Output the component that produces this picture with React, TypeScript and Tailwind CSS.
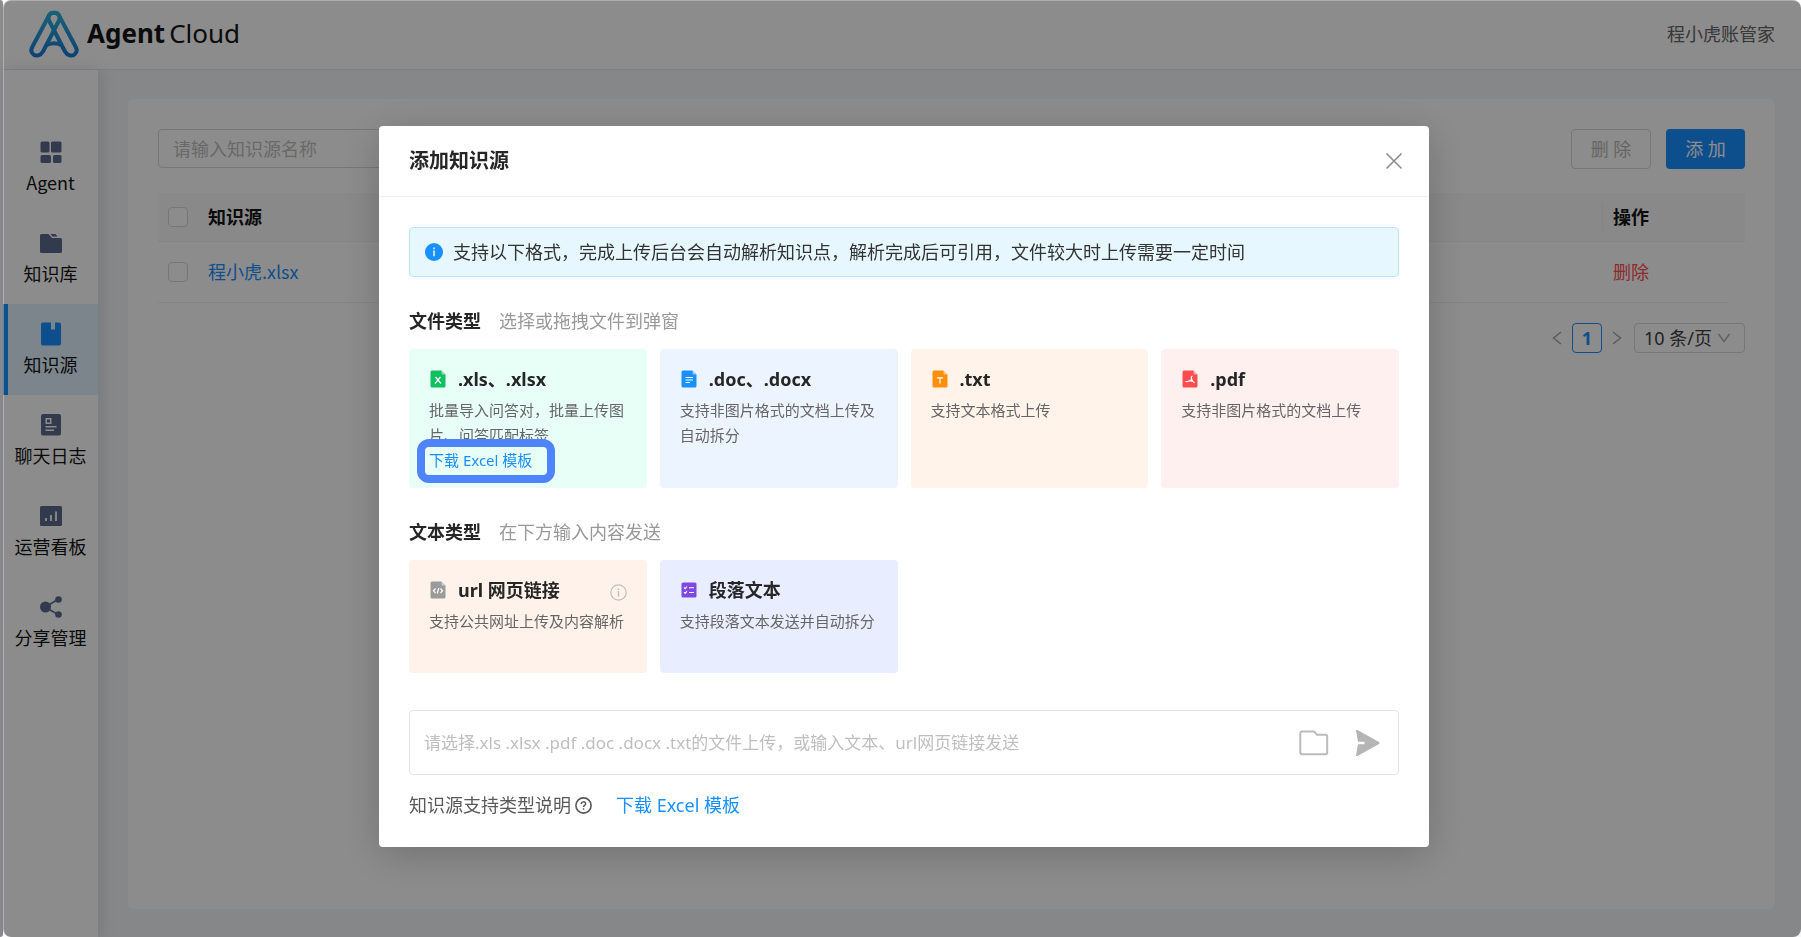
import React, { useState } from "react";

interface NavItem {
    label: string;
    icon: React.ReactNode;
    active?: boolean;
}

interface SourceCard {
    title: string;
    desc: string;
    bg: string;
    icon: React.ReactNode;
    download?: boolean;
    info?: boolean;
}

const navItems: NavItem[] = [
    {
        label: "Agent",
        icon: (
            <svg width="24" height="24" viewBox="0 0 24 24" fill="currentColor">
                <rect x="1.5" y="1.5" width="9" height="11" rx="1.5" />
                <rect x="12" y="1.5" width="10.5" height="11" rx="1.5" />
                <rect x="1.5" y="15" width="10.5" height="8" rx="1.5" />
                <rect x="14" y="15" width="8.5" height="8" rx="1.5" />
            </svg>
        ),
    },
    {
        label: "知识库",
        icon: (
            <svg width="24" height="24" viewBox="0 0 24 24" fill="currentColor">
                <path d="M1 4.5A1.5 1.5 0 0 1 2.500 3H9.500L13 7H21.500A1.500 1.500 0 0 1 23 8.500V20.500A1.500 1.500 0 0 1 21.500 22H2.500A1.500 1.500 0 0 1 1 20.500Z" />
                <path d="M11.500 3H16.500L18.500 5.500H13.500Z" />
            </svg>
        ),
    },
    {
        label: "知识源",
        active: true,
        icon: (
            <svg width="24" height="24" viewBox="0 0 24 24" fill="currentColor">
                <path d="M4 0.500H12V7.500H16V0.500H20A2 2 0 0 1 22 2.500V21.500A2 2 0 0 1 20 23.500H4A2 2 0 0 1 2 21.500V2.500A2 2 0 0 1 4 0.500Z" />
            </svg>
        ),
    },
    {
        label: "聊天日志",
        icon: (
            <svg width="24" height="24" viewBox="0 0 24 24" fill="currentColor">
                <path
                    fillRule="evenodd"
                    d="M4 1H20A2 2 0 0 1 22 3V20.500A2 2 0 0 1 20 22.500H4A2 2 0 0 1 2 20.500V3A2 2 0 0 1 4 1ZM6.500 5V11H12.500V5ZM8 6.500H11V9.500H8ZM6.500 13V14.500H17.500V13ZM6.500 16.500V18H15V16.500Z"
                />
            </svg>
        ),
    },
    {
        label: "运营看板",
        icon: (
            <svg width="24" height="24" viewBox="0 0 24 24">
                <rect x="1" y="2" width="22" height="20" rx="1.5" fill="currentColor" />
                <path d="M7 14V17M12 11V17M17 7.500V17" stroke="#fff" strokeWidth="1.800" />
            </svg>
        ),
    },
    {
        label: "分享管理",
        icon: (
            <svg width="24" height="24" viewBox="0 0 24 24" fill="currentColor">
                <path d="M6 12L19 4.500M6 12L19 19.500" stroke="currentColor" strokeWidth="1.500" />
                <circle cx="6.500" cy="12" r="5.500" />
                <circle cx="19.500" cy="4.500" r="3.300" />
                <circle cx="19.500" cy="19.500" r="3.300" />
            </svg>
        ),
    },
];

const FileIcon = ({ color, children }: { color: string; children: React.ReactNode }) => (
    <svg width="16" height="18" viewBox="0 0 16 18" fill="none" className="shrink-0">
        <path d="M2 0.500H11.500L15.500 4.500V16A1.500 1.500 0 0 1 14 17.500H2A1.500 1.500 0 0 1 0.500 16V2A1.500 1.500 0 0 1 2 0.500Z" fill={color} />
        <path d="M11.500 0.500L15.500 4.500H12.500A1 1 0 0 1 11.500 3.500Z" fill="#fff" fillOpacity="0.5" />
        <g stroke="#fff" strokeWidth="1.200">{children}</g>
    </svg>
);

const fileCards: SourceCard[] = [
    {
        title: ".xls、.xlsx",
        desc: "批量导入问答对，批量上传图片、问答匹配标签",
        bg: "bg-[#e8fff8]",
        download: true,
        icon: (
            <FileIcon color="#11c05f">
                <path d="M5.500 7L11 13.500M10.500 7L5 13.500" />
            </FileIcon>
        ),
    },
    {
        title: ".doc、.docx",
        desc: "支持非图片格式的文档上传及自动拆分",
        bg: "bg-[#ecf5ff]",
        icon: (
            <FileIcon color="#1890ff">
                <path d="M4.500 7.500H12M4.500 10H12M4.500 12.500H9" />
            </FileIcon>
        ),
    },
    {
        title: ".txt",
        desc: "支持文本格式上传",
        bg: "bg-[#fff3ea]",
        icon: (
            <FileIcon color="#ff8f0b">
                <path d="M5 7.800H11M8 7.800V13.500" />
            </FileIcon>
        ),
    },
    {
        title: ".pdf",
        desc: "支持非图片格式的文档上传",
        bg: "bg-[#fff0f0]",
        icon: (
            <FileIcon color="#fb4c50">
                <path d="M10.500 6C8.500 6.500 9 10 12.500 12.800M9.300 9.500C8 11.500 6 11.800 3.500 11.500M8.500 10.800L11 11.500" />
            </FileIcon>
        ),
    },
];

const textCards: SourceCard[] = [
    {
        title: "url 网页链接",
        desc: "支持公共网址上传及内容解析",
        bg: "bg-[#fff2ea]",
        info: true,
        icon: (
            <FileIcon color="#9b9b9b">
                <path d="M5.500 7.500L3.500 9.800L5.500 12M10.500 7.500L12.500 9.800L10.500 12M8.800 7L7.200 12.500" />
            </FileIcon>
        ),
    },
    {
        title: "段落文本",
        desc: "支持段落文本发送并自动拆分",
        bg: "bg-[#e8eeff]",
        icon: (
            <svg width="16" height="18" viewBox="0 0 16 18" fill="none" className="shrink-0">
                <rect x="0.500" y="1.500" width="15" height="15" rx="1.500" fill="#7f47e3" />
                <path d="M3 6.500L4.200 7.700L6 5.500M3 11.200L4.200 12.400L6 10.200M8 6.800H13M8 11.500H13" stroke="#fff" strokeWidth="1.100" />
            </svg>
        ),
    },
];

const Logo = () => (
    <svg width="50" height="48" viewBox="0 0 50 48" fill="none">
        <defs>
            <linearGradient id="logo" x1="25" y1="0" x2="25" y2="48" gradientUnits="userSpaceOnUse">
                <stop stopColor="#2fb4d8" />
                <stop offset="1" stopColor="#1876d2" />
            </linearGradient>
        </defs>
        <g stroke="url(#logo)" strokeWidth="4" strokeLinejoin="round">
            <path d="M19.500 6.500C21 1.500 29 1.500 30.500 6.500C31 8.500 30.500 9.500 29.500 11.500L14 41.500C11.500 45.800 7 46.500 4.500 44.500C2 42.500 1.500 40 3.500 36.500Z" />
            <path d="M30.500 6.500C29 1.500 21 1.500 19.500 6.500C19 8.500 19.500 9.500 20.500 11.500L36 41.500C38.500 45.800 43 46.500 45.500 44.500C48 42.500 48.500 40 46.500 36.500Z" />
            <path d="M17 35.500C21 32.500 29 32.500 33 35.500" />
        </g>
    </svg>
);

const Card = ({ card, height }: { card: SourceCard; height: string }) => (
    <section className={`rounded px-5 pt-4 ${card.bg} ${height}`}>
        <div className="flex items-center">
            <span className="ml-px">{card.icon}</span>
            <h4 className="ml-3 text-lg leading-7 font-bold text-[#262626]">{card.title}</h4>
            {card.info && (
                <button type="button" aria-label="说明" className="ml-auto pt-1 text-[#bfbfbf]">
                    <svg width="17" height="17" viewBox="0 0 17 17" fill="none" stroke="currentColor">
                        <circle cx="8.500" cy="8.500" r="7.700" strokeWidth="1.200" />
                        <path d="M8.500 7.300V12.500M8.500 4.500V6" strokeWidth="1.400" />
                    </svg>
                </button>
            )}
        </div>
        <p className="mt-[5px] text-[15px] leading-[25px] text-[#666]">{card.desc}</p>
        {card.download && (
            <div className="relative">
                <a href="#template" className="relative z-10 block text-[15px] leading-[25px] text-[#1890ff]">
                    下载 Excel 模板
                </a>
                <span className="absolute -top-[9px] -left-3 h-[44px] w-[138px] rounded-xl border-8 border-[#5084ff]" />
            </div>
        )}
    </section>
);

const AddSourceModal = ({ onClose }: { onClose: () => void }) => {
    const [text, setText] = useState("");

    return (
        <div className="fixed inset-0 left-[3px] flex items-start justify-center overflow-hidden rounded-lg border-t border-l border-white/30 bg-black/45 pt-[125px] pl-[3px]">
            <div
                role="dialog"
                aria-label="添加知识源"
                className="w-[1050px] rounded bg-white shadow-[0_8px_40px_rgba(0,0,0,0.2)]"
            >
                <header className="flex h-[71px] items-center justify-between border-b border-[#f0f0f0] px-[30px]">
                    <h2 className="text-xl font-bold text-[#262626]">添加知识源</h2>
                    <button type="button" aria-label="关闭" onClick={onClose} className="-mr-2 p-1 text-[#8c8c8c]">
                        <svg width="18" height="18" viewBox="0 0 18 18" stroke="currentColor" strokeWidth="1.600">
                            <path d="M1.500 1.500L16.500 16.500M16.500 1.500L1.500 16.500" />
                        </svg>
                    </button>
                </header>

                <div className="px-[30px] pt-[30px] pb-7">
                    <div className="flex h-[50px] items-center rounded border border-[#bae7ff] bg-[#e6f7ff] px-[15px]">
                        <svg width="18" height="18" viewBox="0 0 18 18">
                            <circle cx="9" cy="9" r="9" fill="#1890ff" />
                            <path d="M9 4.500V6.200M9 7.500V13.200" stroke="#fff" strokeWidth="1.400" />
                        </svg>
                        <span className="ml-[10px] text-lg text-[#333]">
                            支持以下格式，完成上传后台会自动解析知识点，解析完成后可引用，文件较大时上传需要一定时间
                        </span>
                    </div>

                    <div className="mt-[30px] flex gap-[18px] text-lg">
                        <h3 className="font-bold text-[#262626]">文件类型</h3>
                        <span className="text-[#999]">选择或拖拽文件到弹窗</span>
                    </div>
                    <div className="mt-[14px] grid grid-cols-4 gap-[13px]">
                        {fileCards.map((card) => (
                            <Card key={card.title} card={card} height="h-[139px]" />
                        ))}
                    </div>

                    <div className="mt-[30px] flex gap-[18px] text-lg">
                        <h3 className="font-bold text-[#262626]">文本类型</h3>
                        <span className="text-[#999]">在下方输入内容发送</span>
                    </div>
                    <div className="mt-[14px] grid grid-cols-4 gap-[13px]">
                        {textCards.map((card) => (
                            <Card key={card.title} card={card} height="h-[113px]" />
                        ))}
                    </div>

                    <div className="mt-[37px] flex h-[65px] items-center rounded border border-[#e6e6e6] pr-[17px] pl-[14px]">
                        <input
                            type="text"
                            aria-label="内容"
                            value={text}
                            onChange={(e) => setText(e.target.value)}
                            placeholder="请选择.xls .xlsx .pdf .doc .docx .txt的文件上传，或输入文本、url网页链接发送"
                            className="min-w-0 flex-1 text-[17px] outline-none placeholder:text-[#bfbfbf]"
                        />
                        <button type="button" aria-label="选择文件" className="text-[#bcbcbc]">
                            <svg width="30" height="26" viewBox="0 0 30 26" fill="none" stroke="currentColor" strokeWidth="2">
                                <path d="M3 1.500H15L18 4.800H26.500A1.700 1.700 0 0 1 28.200 6.500V22.500A1.700 1.700 0 0 1 26.500 24.200H3A1.700 1.700 0 0 1 1.300 22.500V3.200A1.700 1.700 0 0 1 3 1.500Z" />
                            </svg>
                        </button>
                        <button type="button" aria-label="发送" className="ml-[26px] text-[#b5b5b5]">
                            <svg width="26" height="28" viewBox="0 0 26 28" fill="currentColor">
                                <path d="M1 1.500C1 0.800 1.800 0.500 2.500 0.900L24 12.900C24.800 13.400 24.800 14.400 24 14.900L2.500 26.900C1.800 27.300 1 27 1 26.200L3 15.200H9.500V12.800H3Z" />
                            </svg>
                        </button>
                    </div>

                    <div className="mt-4 flex items-center text-lg text-[#595959]">
                        <span>知识源支持类型说明</span>
                        <svg width="17" height="17" viewBox="0 0 17 17" fill="none" stroke="currentColor" className="ml-1">
                            <circle cx="8.500" cy="8.500" r="7.600" strokeWidth="1.600" />
                            <path d="M6.300 7C6.300 4.200 10.700 4.200 10.700 6.800C10.700 8.300 8.500 8.300 8.500 10M8.500 11.200V12.800" strokeWidth="1.500" />
                        </svg>
                        <a href="#template" className="ml-6 text-[#1890ff]">
                            下载 Excel 模板
                        </a>
                    </div>
                </div>
            </div>
        </div>
    );
};

const App = () => {
    const [open, setOpen] = useState(true);

    return (
        <div className="flex min-h-screen font-['Noto_Sans','Noto_Sans_CJK_SC',sans-serif]">
            <div className="w-[3px] shrink-0 rounded-r-sm bg-[#8c8c8c]" />
            <div className="flex min-w-0 flex-1 flex-col bg-[#f5f6f7]">
                <header className="flex h-[70px] items-center justify-between border-b border-[#eaeaea] bg-white pr-[26px] pb-[2px] pl-[26px]">
                    <div className="flex items-center">
                        <Logo />
                        <span className="ml-2 text-[26px] text-[#141414]">
                            <b>Agent</b>
                            <span className="ml-1">Cloud</span>
                        </span>
                    </div>
                    <span className="text-lg text-[#666]">程小虎账管家</span>
                </header>

                <div className="flex flex-1">
                    <nav className="w-[95px] shrink-0 bg-white pt-[52px] shadow-[2px_0_14px_rgba(60,80,130,0.18)]">
                        {navItems.map((item) => (
                            <a
                                key={item.label}
                                href="#nav"
                                className={`flex h-[91px] flex-col items-center border-l-[5px] pt-[18px] pr-[5px] font-['Noto_Sans_CJK_SC',sans-serif] text-lg leading-7 text-[#141414] ${
                                    item.active ? "border-[#1890ff] bg-[#e1f3fd]" : "border-transparent"
                                }`}
                            >
                                <span className={item.active ? "text-[#1890ff]" : "text-[#5c6b8f]"}>{item.icon}</span>
                                <span className="mt-1 whitespace-nowrap">{item.label}</span>
                            </a>
                        ))}
                    </nav>

                    <main className="mt-[29px] mr-[26px] mb-7 ml-[30px] flex-1 rounded-md bg-white px-[30px] pt-[30px]">
                        <div className="flex items-start">
                            <input
                                type="text"
                                aria-label="知识源名称"
                                placeholder="请输入知识源名称"
                                className="h-[39px] w-[300px] rounded border border-[#d9d9d9] px-[14px] text-lg placeholder:text-[#bfbfbf]"
                            />
                            <button
                                type="button"
                                disabled
                                className="ml-auto h-10 w-20 rounded border border-[#d9d9d9] text-lg text-[#b8b8b8]"
                            >
                                删 除
                            </button>
                            <button
                                type="button"
                                onClick={() => setOpen(true)}
                                className="ml-[15px] h-10 w-[79px] rounded bg-[#1890ff] text-lg text-white"
                            >
                                添 加
                            </button>
                        </div>

                        <table className="mt-6 w-full text-left text-lg">
                            <thead className="bg-[#fafafa]">
                                <tr className="h-12 border-b border-[#f0f0f0]">
                                    <th className="w-[50px] pl-[10px]">
                                        <input type="checkbox" aria-label="全选" className="block size-5 appearance-none rounded border border-[#d9d9d9] bg-white" />
                                    </th>
                                    <th className="text-[#141414]">知识源</th>
                                    <th className="w-[126px] text-[#141414]">
                                        <span className="block border-l border-[#f0f0f0] pl-[10px]">操作</span>
                                    </th>
                                    <th className="w-[17px]" />
                                </tr>
                            </thead>
                            <tbody>
                                <tr className="h-[61px]">
                                    <td className="border-b border-[#f0f0f0] pl-[10px]">
                                        <input type="checkbox" aria-label="程小虎.xlsx" className="block size-5 appearance-none rounded border border-[#d9d9d9] bg-white" />
                                    </td>
                                    <td className="border-b border-[#f0f0f0]">
                                        <a href="#file" className="font-['Noto_Sans_CJK_SC',sans-serif] text-[#1890ff]">程小虎.xlsx</a>
                                    </td>
                                    <td className="border-b border-[#f0f0f0] pl-[11px]">
                                        <button type="button" className="text-[#ff4d4f]">删除</button>
                                    </td>
                                    <td />
                                </tr>
                            </tbody>
                        </table>

                        <div className="mt-5 flex items-center justify-end">
                            <button type="button" aria-label="上一页" className="text-[#a6a6a6]">
                                <svg width="10" height="14" viewBox="0 0 10 14" fill="none" stroke="currentColor" strokeWidth="1.500">
                                    <path d="M9 1L1.500 7L9 13" />
                                </svg>
                            </button>
                            <button type="button" className="mx-[10px] size-[30px] rounded border border-[#1890ff] text-lg leading-none font-bold text-[#1890ff]">
                                1
                            </button>
                            <button type="button" aria-label="下一页" className="text-[#a6a6a6]">
                                <svg width="10" height="14" viewBox="0 0 10 14" fill="none" stroke="currentColor" strokeWidth="1.500">
                                    <path d="M1 1L8.500 7L1 13" />
                                </svg>
                            </button>
                            <div className="relative ml-3">
                                <select
                                    aria-label="每页条数"
                                    className="h-[30px] w-[111px] appearance-none rounded border border-[#d9d9d9] pl-[9px] text-lg leading-7 text-[#404040]"
                                >
                                    <option>10 条/页</option>
                                </select>
                                <svg width="12" height="10" viewBox="0 0 12 10" fill="none" stroke="#b0b0b0" strokeWidth="1.400" className="pointer-events-none absolute top-[10px] right-[15px]">
                                    <path d="M0.500 1L6 8.500L11.500 1" />
                                </svg>
                            </div>
                        </div>
                    </main>
                </div>
            </div>

            {open && <AddSourceModal onClose={() => setOpen(false)} />}
        </div>
    );
};

export default App;
